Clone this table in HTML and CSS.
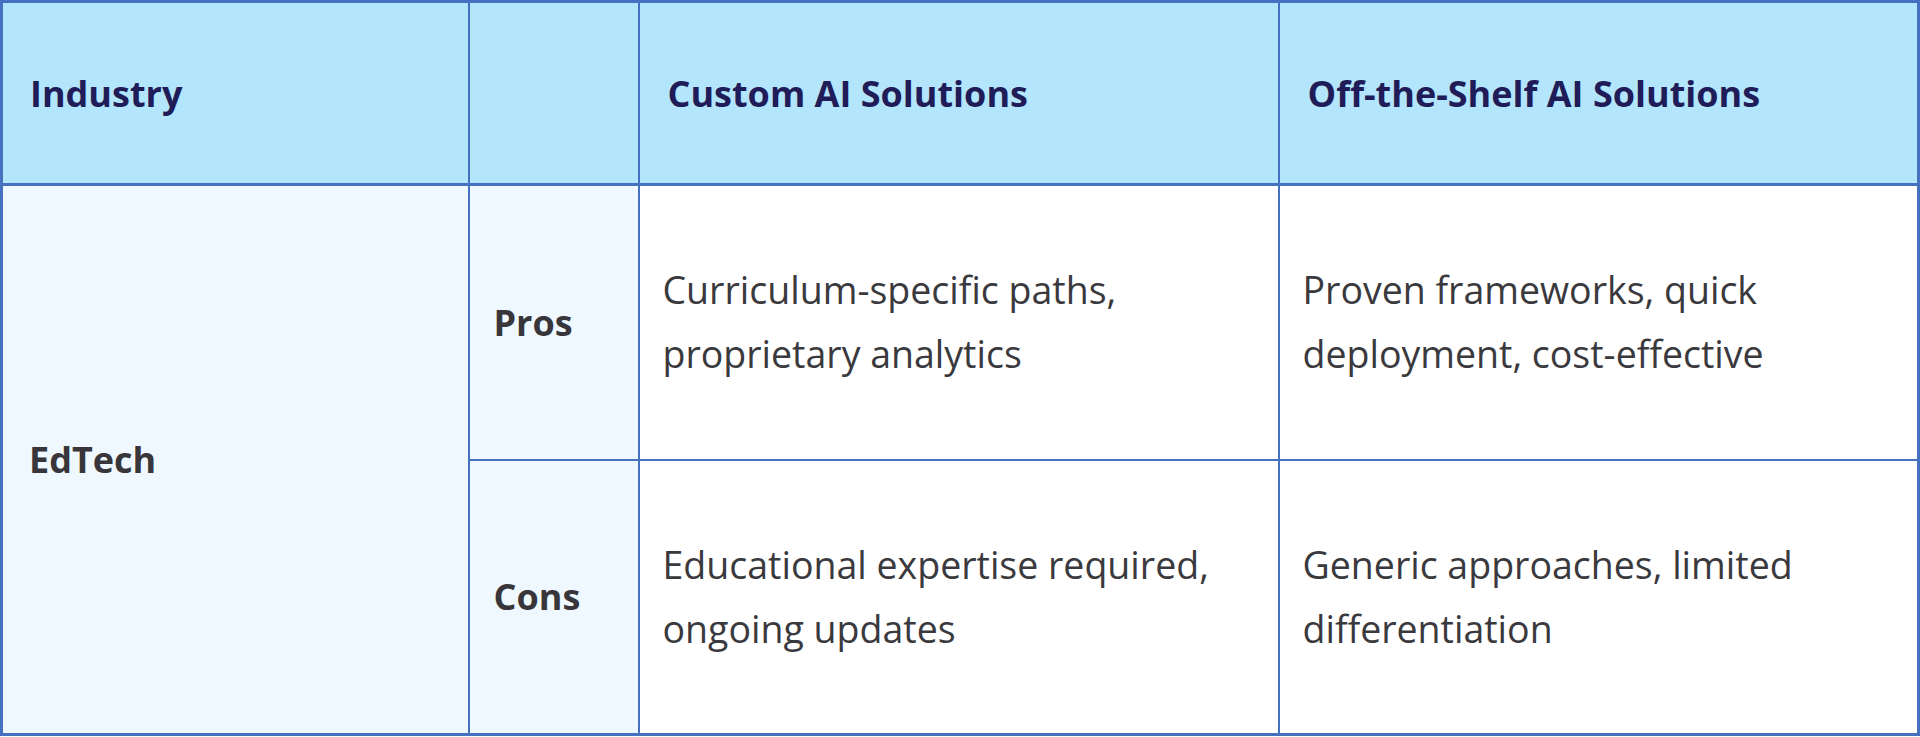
FILE: index.html
```html
<!DOCTYPE html>
<html lang="en">
<head>
<meta charset="utf-8">
<title>Custom vs Off-the-Shelf AI Solutions</title>
<link rel="stylesheet" href="styles.css">
</head>
<body>
<table class="compare">
  <colgroup>
    <col class="c-industry">
    <col class="c-label">
    <col class="c-custom">
    <col class="c-shelf">
  </colgroup>
  <thead>
    <tr class="head-row">
      <th class="h-industry">Industry</th>
      <th></th>
      <th>Custom AI Solutions</th>
      <th>Off-the-Shelf AI Solutions</th>
    </tr>
  </thead>
  <tbody>
    <tr class="pros-row">
      <td class="industry" rowspan="2">EdTech</td>
      <td class="label">Pros</td>
      <td class="text">Curriculum-specific paths, proprietary analytics</td>
      <td class="text">Proven frameworks, quick deployment, cost-effective</td>
    </tr>
    <tr class="cons-row">
      <td class="label">Cons</td>
      <td class="text">Educational expertise required, ongoing updates</td>
      <td class="text">Generic approaches, limited differentiation</td>
    </tr>
  </tbody>
</table>
</body>
</html>
```
FILE: styles.css
```css
html, body {
  margin: 0;
  padding: 0;
  background: #ffffff;
}

.compare {
  width: 1920px;
  border-collapse: collapse;
  table-layout: fixed;
  font-family: "Open Sans", "DejaVu Sans", sans-serif;
  border: 3px solid #4670c0;
}

.c-industry { width: 467px; }
.c-label { width: 170px; }
.c-custom { width: 640px; }

.compare th,
.compare td {
  border: 2px solid #4670c0;
  vertical-align: middle;
  text-align: left;
  padding: 0 28px;
}

.head-row { height: 183px; }
.head-row th {
  background: #b3e5fc;
  color: #201c58;
  font-size: 36px;
  font-weight: 700;
  border-bottom-width: 3px;
}

.head-row .h-industry { padding-left: 27px; }

.pros-row { height: 275px; }
.cons-row { height: 275px; }

.industry,
.label {
  background: #eef8fe;
  color: #38363b;
  font-size: 36px;
  font-weight: 700;
}

.compare .industry { padding-left: 26px; }
.compare .label { padding-left: 24px; }

.compare .text {
  background: #ffffff;
  color: #3a393e;
  font-size: 37.5px;
  line-height: 64px;
  font-weight: 400;
  padding-left: 23px;
}
```
